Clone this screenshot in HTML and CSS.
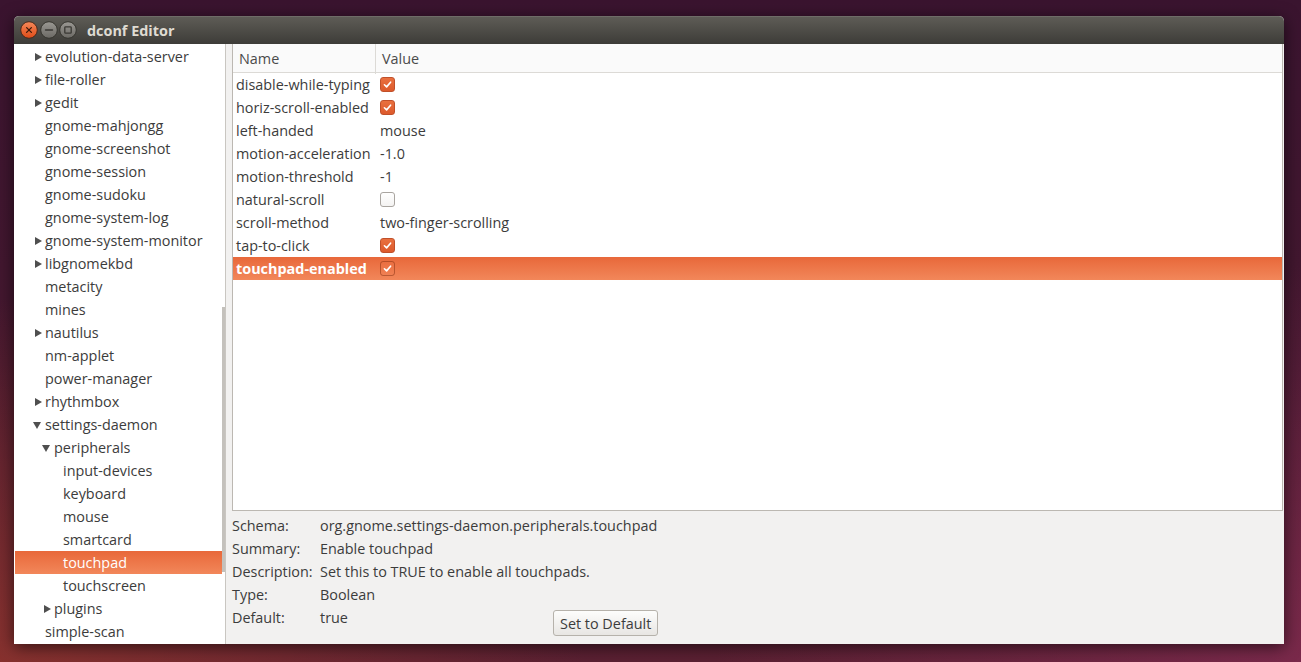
FILE: index.html
```html
<!DOCTYPE html>
<html lang="en">
<head>
    <meta charset="UTF-8">
    <meta name="viewport" content="width=device-width, initial-scale=1.0">
    <title>dconf Editor</title>
    <link rel="stylesheet" href="styles.css">
</head>
<body>
    <div class="window">
        <div class="titlebar">
            <div class="wm-buttons">
                <span class="wm-btn">
                    <svg viewBox="0 0 18 18">
                        <defs>
                            <linearGradient id="closeFill" x1="0" y1="0" x2="0" y2="1">
                                <stop offset="0" stop-color="#f5895a"/>
                                <stop offset="1" stop-color="#df4b17"/>
                            </linearGradient>
                        </defs>
                        <circle cx="9" cy="9" r="8.3" fill="url(#closeFill)" stroke="#4a2a1c" stroke-width="1"/>
                        <path d="M6.6 6.6 L11.4 11.4 M11.4 6.6 L6.6 11.4" stroke="#3b1a0c" stroke-width="1.3" stroke-linecap="round"/>
                    </svg>
                </span>
                <span class="wm-btn">
                    <svg viewBox="0 0 18 18">
                        <defs>
                            <linearGradient id="grayFill" x1="0" y1="0" x2="0" y2="1">
                                <stop offset="0" stop-color="#9a9893"/>
                                <stop offset="1" stop-color="#6b6964"/>
                            </linearGradient>
                        </defs>
                        <circle cx="9" cy="9" r="8.3" fill="url(#grayFill)" stroke="#36352f" stroke-width="1"/>
                        <path d="M5.5 9 L12.5 9" stroke="#3a3934" stroke-width="1.4" stroke-linecap="round"/>
                    </svg>
                </span>
                <span class="wm-btn">
                    <svg viewBox="0 0 18 18">
                        <circle cx="9" cy="9" r="8.3" fill="url(#grayFill)" stroke="#36352f" stroke-width="1"/>
                        <rect x="5.8" y="5.8" width="6.4" height="6.4" rx="0.8" fill="none" stroke="#3a3934" stroke-width="1.3"/>
                    </svg>
                </span>
            </div>
            <span class="title">dconf Editor</span>
        </div>

        <div class="content">
            <div class="sidebar">
                <ul class="tree">
                    <li class="node lvl1"><span class="expander closed"></span>evolution-data-server</li>
                    <li class="node lvl1"><span class="expander closed"></span>file-roller</li>
                    <li class="node lvl1"><span class="expander closed"></span>gedit</li>
                    <li class="node lvl1"><span class="expander"></span>gnome-mahjongg</li>
                    <li class="node lvl1"><span class="expander"></span>gnome-screenshot</li>
                    <li class="node lvl1"><span class="expander"></span>gnome-session</li>
                    <li class="node lvl1"><span class="expander"></span>gnome-sudoku</li>
                    <li class="node lvl1"><span class="expander"></span>gnome-system-log</li>
                    <li class="node lvl1"><span class="expander closed"></span>gnome-system-monitor</li>
                    <li class="node lvl1"><span class="expander closed"></span>libgnomekbd</li>
                    <li class="node lvl1"><span class="expander"></span>metacity</li>
                    <li class="node lvl1"><span class="expander"></span>mines</li>
                    <li class="node lvl1"><span class="expander closed"></span>nautilus</li>
                    <li class="node lvl1"><span class="expander"></span>nm-applet</li>
                    <li class="node lvl1"><span class="expander"></span>power-manager</li>
                    <li class="node lvl1"><span class="expander closed"></span>rhythmbox</li>
                    <li class="node lvl1"><span class="expander open"></span>settings-daemon</li>
                    <li class="node lvl2"><span class="expander open"></span>peripherals</li>
                    <li class="node lvl3"><span class="expander"></span>input-devices</li>
                    <li class="node lvl3"><span class="expander"></span>keyboard</li>
                    <li class="node lvl3"><span class="expander"></span>mouse</li>
                    <li class="node lvl3"><span class="expander"></span>smartcard</li>
                    <li class="node lvl3 selected"><span class="expander"></span>touchpad</li>
                    <li class="node lvl3"><span class="expander"></span>touchscreen</li>
                    <li class="node lvl2"><span class="expander closed"></span>plugins</li>
                    <li class="node lvl1"><span class="expander"></span>simple-scan</li>
                </ul>
                <div class="scrollbar"><div class="thumb"></div></div>
            </div>

            <div class="main">
                <div class="keys">
                    <div class="keys-header">
                        <div class="col-name">Name</div>
                        <div class="col-value">Value</div>
                    </div>
                    <div class="key-row">
                        <span class="key-name">disable-while-typing</span>
                        <span class="key-value"><span class="check checked"><svg viewBox="0 0 16 16"><path d="M4.2 8.3 L6.9 10.9 L11.8 5.2"/></svg></span></span>
                    </div>
                    <div class="key-row">
                        <span class="key-name">horiz-scroll-enabled</span>
                        <span class="key-value"><span class="check checked"><svg viewBox="0 0 16 16"><path d="M4.2 8.3 L6.9 10.9 L11.8 5.2"/></svg></span></span>
                    </div>
                    <div class="key-row">
                        <span class="key-name">left-handed</span>
                        <span class="key-value">mouse</span>
                    </div>
                    <div class="key-row">
                        <span class="key-name">motion-acceleration</span>
                        <span class="key-value">-1.0</span>
                    </div>
                    <div class="key-row">
                        <span class="key-name">motion-threshold</span>
                        <span class="key-value">-1</span>
                    </div>
                    <div class="key-row">
                        <span class="key-name">natural-scroll</span>
                        <span class="key-value"><span class="check"></span></span>
                    </div>
                    <div class="key-row">
                        <span class="key-name">scroll-method</span>
                        <span class="key-value">two-finger-scrolling</span>
                    </div>
                    <div class="key-row">
                        <span class="key-name">tap-to-click</span>
                        <span class="key-value"><span class="check checked"><svg viewBox="0 0 16 16"><path d="M4.2 8.3 L6.9 10.9 L11.8 5.2"/></svg></span></span>
                    </div>
                    <div class="key-row selected">
                        <span class="key-name">touchpad-enabled</span>
                        <span class="key-value"><span class="check checked"><svg viewBox="0 0 16 16"><path d="M4.2 8.3 L6.9 10.9 L11.8 5.2"/></svg></span></span>
                    </div>
                </div>

                <div class="details">
                    <span>Schema:</span>
                    <span class="wide">org.gnome.settings-daemon.peripherals.touchpad</span>
                    <span>Summary:</span>
                    <span class="wide">Enable touchpad</span>
                    <span>Description:</span>
                    <span class="wide">Set this to TRUE to enable all touchpads.</span>
                    <span>Type:</span>
                    <span class="wide">Boolean</span>
                    <span>Default:</span>
                    <span>true</span>
                    <button class="default-btn">Set to Default</button>
                </div>
            </div>
        </div>
    </div>
</body>
</html>
```

FILE: styles.css
```css
body {
    margin: 0;
    height: 662px;
    overflow: hidden;
    box-sizing: border-box;
    padding: 16px 0 0 14px;
    font-family: "Open Sans", "Noto Sans", sans-serif;
    font-size: 14.4px;
    color: #3c3c3c;
    background:
        radial-gradient(ellipse 45% 55% at 0% 100%, rgba(150, 55, 45, 0.75), rgba(150, 55, 45, 0)),
        radial-gradient(ellipse 45% 60% at 100% 100%, rgba(135, 45, 85, 0.7), rgba(135, 45, 85, 0)),
        linear-gradient(#3a142f, #45182f 55%, #5a2032);
}

/* window frame */
.window {
    width: 1270px;
    height: 628px;
    display: flex;
    flex-direction: column;
    background: #f2f1f0;
    border-radius: 5px 5px 0 0;
    box-shadow: 0 3px 16px rgba(0, 0, 0, 0.6);
}
.titlebar {
    flex: none;
    height: 28px;
    display: flex;
    align-items: center;
    padding-left: 6px;
    background: linear-gradient(#5f5d57, #3d3c38);
    border-radius: 5px 5px 0 0;
    box-shadow: inset 0 1px rgba(255, 255, 255, 0.1);
}
.wm-buttons {
    display: flex;
    gap: 1.5px;
}
.wm-btn svg {
    display: block;
    width: 18px;
    height: 18px;
}
.title {
    margin-left: 10px;
    font-weight: 700;
    color: #dfdbd2;
}

.content {
    flex: 1;
    display: flex;
    min-height: 0;
}

/* left tree */
.sidebar {
    flex: none;
    width: 210px;
    display: flex;
    padding-left: 1px;
    background: #fff;
    border-right: 1px solid #c9c6c1;
    overflow: hidden;
}
.tree {
    list-style: none;
    margin: 0;
    padding: 1px 0 0;
    width: 207px;
}
.node {
    height: 23px;
    line-height: 23px;
    display: flex;
    align-items: center;
    white-space: nowrap;
}
.lvl1 { padding-left: 18px; }
.lvl2 { padding-left: 27px; }
.lvl3 { padding-left: 36px; }
.node.selected {
    background: linear-gradient(#e8683a, #f2875a);
    color: #fff;
}
.expander {
    flex: none;
    width: 12px;
    height: 23px;
    display: flex;
    align-items: center;
}
.expander.closed::before {
    content: "";
    margin-left: 2px;
    border-left: 7px solid #4f4f4f;
    border-top: 4.5px solid transparent;
    border-bottom: 4.5px solid transparent;
}
.expander.open::before {
    content: "";
    margin-top: 1px;
    border-top: 7px solid #4f4f4f;
    border-left: 4.5px solid transparent;
    border-right: 4.5px solid transparent;
}
.scrollbar {
    width: 3px;
}
.thumb {
    margin-top: 263px;
    height: 265px;
    background: #c4c1bc;
}

/* right side */
.main {
    flex: 1;
    display: flex;
    flex-direction: column;
    padding: 0 1px 0 6px;
}
.keys {
    flex: none;
    height: 467px;
    box-sizing: border-box;
    background: #fff;
    border: 1px solid #bcb8b2;
    border-top: none;
}
.keys-header {
    display: grid;
    grid-template-columns: 143px 1fr;
    height: 28px;
    line-height: 30px;
    background: #fafafa;
    border-bottom: 1px solid #dcdad6;
    color: #4a4a4a;
}
.col-name {
    padding-left: 6px;
    border-right: 1px solid #dcdad6;
}
.col-value {
    padding-left: 6px;
}
.key-row {
    display: grid;
    grid-template-columns: 144px 1fr;
    height: 23px;
    line-height: 23px;
    align-items: center;
}
.key-name {
    padding-left: 3px;
    white-space: nowrap;
}
.key-value {
    padding-left: 3px;
    display: flex;
    align-items: center;
}
.key-row.selected {
    background: linear-gradient(#e8683a, #f2875a);
    color: #fff;
    font-weight: 700;
}

.check {
    width: 15px;
    height: 15px;
    box-sizing: border-box;
    border: 1px solid #a9a5a0;
    border-radius: 3px;
    background: linear-gradient(#ffffff, #f4f3f2);
}
.check.checked {
    border-color: #c0502a;
    background: linear-gradient(#e9703f, #dd5a2c);
}
.check svg {
    display: block;
    width: 13px;
    height: 13px;
}
.check svg path {
    fill: none;
    stroke: #fff;
    stroke-width: 2;
    stroke-linecap: round;
    stroke-linejoin: round;
}
.key-row.selected .check {
    border-color: rgba(120, 40, 10, 0.45);
    background: transparent;
}

/* key details */
.details {
    display: grid;
    grid-template-columns: 88px 233px auto;
    grid-auto-rows: 23px;
    line-height: 23px;
    padding-top: 3px;
    white-space: nowrap;
}
.details .wide {
    grid-column: span 2;
}
.default-btn {
    justify-self: start;
    margin-top: 4px;
    height: 26px;
    padding: 0 6px;
    font: inherit;
    color: #3c3c3c;
    border: 1px solid #b6b2ab;
    border-radius: 3px;
    background: linear-gradient(#fdfdfc, #e8e6e3);
}
```
